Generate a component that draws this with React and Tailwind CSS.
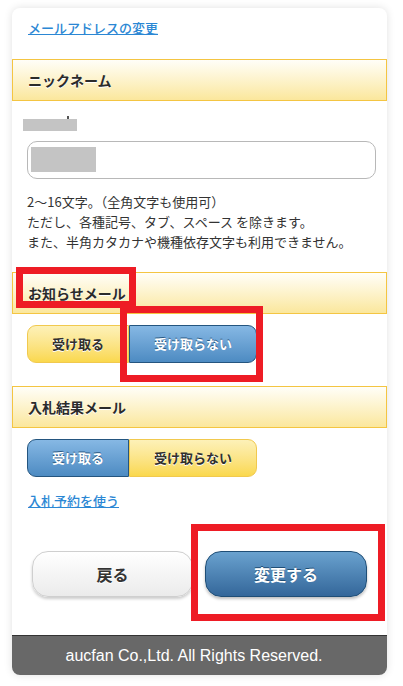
const jp = { fontFamily: '"Noto Sans CJK JP", "Noto Sans", sans-serif' };

function SectionHeader({ children }) {
  return (
    <div className="h-[42px] flex items-center px-[15px] border border-[#f4c542] bg-gradient-to-b from-[#fffef8] to-[#fbe79c]">
      <span className="text-[14px] font-bold text-[#2b2b2b]" style={{ textShadow: '0 1px 0 #fff' }}>{children}</span>
    </div>
  );
}

function Toggle({ value }) {
  const yellow = 'bg-gradient-to-b from-[#fdf1b8] to-[#fad84c] border-[#f1c94e] text-[#2f2f2f]';
  const blue = 'bg-gradient-to-b from-[#86b8e4] to-[#4d8bc2] border-[#24557f] text-white';
  const on = value === 'on';
  return (
    <div className="flex h-[38px] w-[230px] text-[13px] font-bold">
      <button
        className={`w-[102px] rounded-l-[9px] border ${on ? blue : yellow}`}
        style={{ textShadow: on ? '0 -1px 0 #2a5a85' : '0 1px 0 #fff' }}
      >
        受け取る
      </button>
      <button
        className={`flex-1 rounded-r-[9px] border ${on ? yellow : blue}`}
        style={{ textShadow: on ? '0 1px 0 #fff' : '0 -1px 0 #2a5a85' }}
      >
        受け取らない
      </button>
    </div>
  );
}

export default function App() {
  return (
    <div className="relative min-h-[686px] bg-white pt-[8px] px-[12px]" style={jp}>
      <div className="w-[375px] rounded-[8px] bg-white shadow-[0_0_8px_rgba(0,0,0,0.12)] overflow-hidden">
        <div className="px-[16px] pt-[10px] h-[51px]">
          <a className="block text-[13px] leading-[20px] text-[#2b87d4] underline font-medium">メールアドレスの変更</a>
        </div>

        <SectionHeader>ニックネーム</SectionHeader>
        <div className="px-[15px] pt-[18px] pb-[20px]">
          <div className="relative h-[12px] w-[54px] -ml-[4px] bg-[#c4c4c4]">
            <span className="absolute left-[44px] -top-[3px] w-[2px] h-[3px] bg-[#555]" />
          </div>
          <div className="mt-[10px] h-[38px] w-[349px] rounded-[10px] border border-[#b8b8b8] px-[3px] pt-[5px]">
            <div className="h-[25px] w-[65px] bg-[#c4c4c4]" />
          </div>
          <div className="mt-[13px] text-[13px] leading-[20px] text-[#333]">
            <p>2～16文字。（全角文字も使用可）</p>
            <p>ただし、各種記号、タブ、スペース を除きます。</p>
            <p>また、半角カタカナや機種依存文字も利用できません。</p>
          </div>
        </div>

        <SectionHeader>お知らせメール</SectionHeader>
        <div className="px-[15px] pt-[11px] pb-[23px]">
          <Toggle value="off" />
        </div>

        <SectionHeader>入札結果メール</SectionHeader>
        <div className="px-[15px] pt-[11px]">
          <Toggle value="on" />
        </div>
        <div className="px-[16px] pt-[14px]">
          <a className="block text-[13px] leading-[20px] text-[#2b87d4] underline font-medium">入札予約を使う</a>
        </div>

        <div className="flex gap-[12px] px-[20px] pt-[40px] pb-[38px]">
          <button
            className="h-[46px] w-[161px] rounded-[16px] border border-[#cfcfcf] bg-gradient-to-b from-white to-[#ebebeb] text-[16px] font-bold text-[#333] shadow-[0_2px_3px_rgba(0,0,0,0.2)]"
            style={{ textShadow: '0 1px 0 #fff' }}
          >
            戻る
          </button>
          <button
            className="h-[46px] w-[162px] rounded-[16px] border border-[#1f4e76] bg-gradient-to-b from-[#6aa2cf] to-[#34679a] text-[16px] font-bold text-white shadow-[0_2px_3px_rgba(0,0,0,0.25)]"
            style={{ textShadow: '0 -1px 0 #1f4e76' }}
          >
            変更する
          </button>
        </div>

        <div
          className="h-[40px] flex items-center justify-center pr-[11px] bg-[#686868] border-t border-[#333] text-[16px] text-white"
          style={{ fontFamily: '"Liberation Sans", Arial, sans-serif' }}
        >
          aucfan Co.,Ltd. All Rights Reserved.
        </div>
      </div>

      <div className="absolute left-[16px] top-[267px] w-[120px] h-[41px] border-[7px] border-[#ee1c25]" />
      <div className="absolute left-[120px] top-[306px] w-[143px] h-[76px] border-[7px] border-[#ee1c25]" />
      <div className="absolute left-[191px] top-[524px] w-[194px] h-[97px] border-[7px] border-[#ee1c25]" />
    </div>
  );
}
